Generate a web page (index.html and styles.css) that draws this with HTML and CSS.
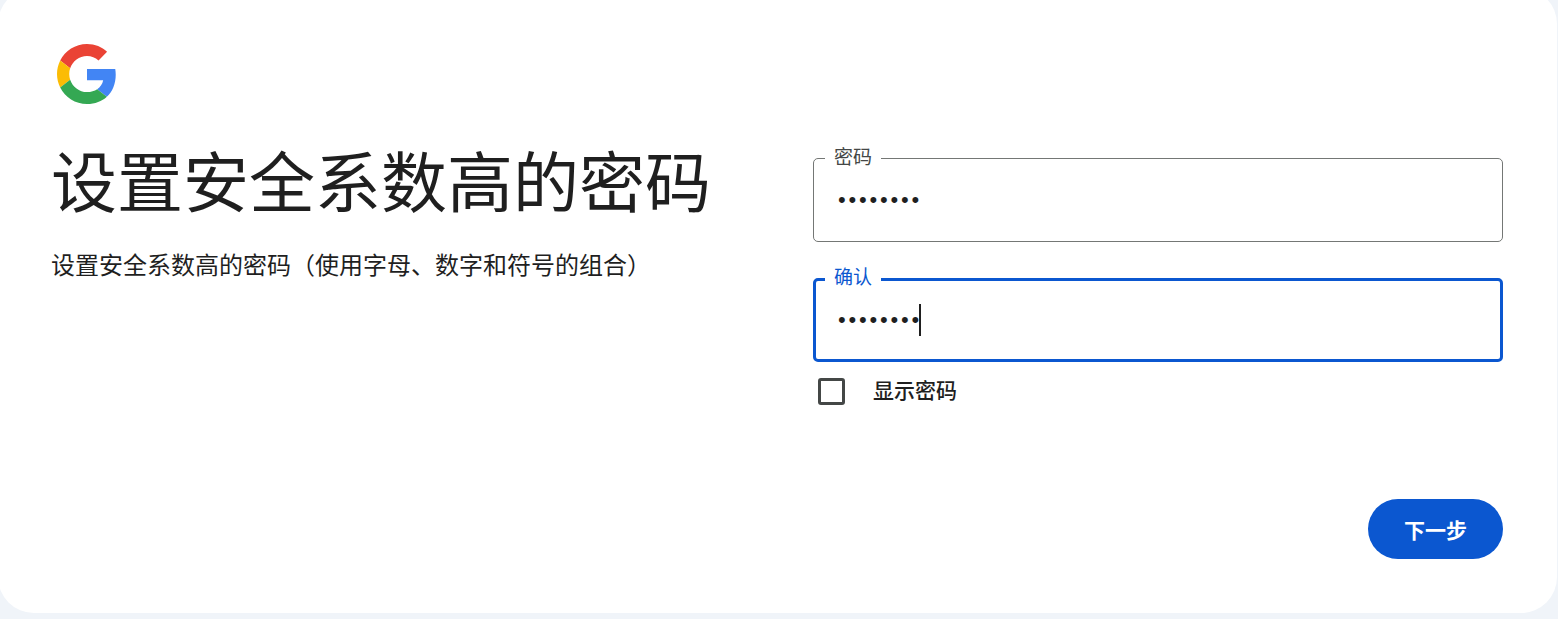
FILE: index.html
```html
<!DOCTYPE html>
<html lang="zh-CN">
<head>
<meta charset="utf-8">
<title>设置安全系数高的密码</title>
<link rel="stylesheet" href="styles.css">
</head>
<body>
<main class="card">
  <svg class="logo" viewBox="0 0 48 48" aria-hidden="true">
    <path fill="#EA4335" d="M24 9.5c3.54 0 6.71 1.22 9.21 3.6l6.85-6.85C35.9 2.38 30.47 0 24 0 14.62 0 6.51 5.38 2.56 13.22l7.98 6.19C12.43 13.72 17.74 9.5 24 9.5z"/>
    <path fill="#4285F4" d="M46.98 24.55c0-1.57-.15-3.09-.38-4.55H24v9.02h12.94c-.58 2.96-2.26 5.48-4.78 7.18l7.73 6c4.51-4.18 7.09-10.36 7.09-17.65z"/>
    <path fill="#FBBC05" d="M10.53 28.59c-.48-1.45-.76-2.99-.76-4.59s.27-3.14.76-4.59l-7.98-6.19C.92 16.46 0 20.12 0 24c0 3.88.92 7.54 2.56 10.78l7.97-6.19z"/>
    <path fill="#34A853" d="M24 48c6.48 0 11.93-2.13 15.89-5.81l-7.73-6c-2.15 1.45-4.92 2.3-8.16 2.3-6.26 0-11.57-4.22-13.47-9.91l-7.98 6.19C6.51 42.62 14.62 48 24 48z"/>
  </svg>
  <div class="columns">
    <section class="intro">
      <h1 class="title">设置安全系数高的密码</h1>
      <p class="subtitle">设置安全系数高的密码（使用字母、数字和符号的组合）</p>
    </section>
    <section class="form">
      <div class="field">
        <span class="field-label">密码</span>
        <span class="dots">••••••••</span>
      </div>
      <div class="field field-focused">
        <span class="field-label">确认</span>
        <span class="dots">••••••••</span><span class="caret"></span>
      </div>
      <div class="show-row">
        <span class="checkbox"></span>
        <span class="show-label">显示密码</span>
      </div>
    </section>
  </div>
  <div class="actions">
    <button class="next" type="button">下一步</button>
  </div>
</main>
</body>
</html>
```
FILE: styles.css
```css
* { box-sizing: border-box; }
html, body { margin: 0; height: 100%; }
body {
  background: #f0f4f9;
  font-family: "Noto Sans CJK SC", "Liberation Sans", sans-serif;
  color: #1f1f1f;
  overflow: hidden;
  height: 619px;
}
.card {
  width: 1559px;
  height: 625px;
  margin: -12px 0 0 -2px;
  background: #fff;
  border-radius: 36px;
  padding: 56px 54px 54px 53px;
  display: flex;
  flex-direction: column;
}
.logo {
  width: 60px;
  height: 60px;
  margin-left: 6px;
  flex: none;
}
.columns {
  display: flex;
  margin-top: 54px;
  flex: 1;
}
.intro { width: 762px; flex: none; }
.title {
  margin: -18px 0 0;
  font-size: 66px;
  line-height: 76px;
  font-weight: 400;
}
.subtitle {
  margin: 31px 0 0;
  font-size: 24px;
  line-height: 34px;
  font-weight: 400;
}
.form { flex: 1; display: flex; flex-direction: column; gap: 36px; }
.field {
  position: relative;
  height: 84px;
  border: 1px solid #747775;
  border-radius: 5px;
  padding-left: 24px;
  display: flex;
  align-items: center;
}
.field-focused {
  border: 3px solid #0b57d0;
  padding-left: 22px;
}
.field-label {
  position: absolute;
  left: 11px;
  top: -15px;
  background: #fff;
  padding: 0 9px;
  font-size: 19px;
  line-height: 24px;
  color: #444746;
}
.field-focused .field-label { left: 9px; top: -17px; color: #0b57d0; }
.dots {
  font-family: "Liberation Sans", sans-serif;
  font-size: 22px;
  letter-spacing: 2.8px;
  line-height: 30px;
  color: #1f1f1f;
  margin-right: -2.8px;
}
.caret {
  width: 2px;
  height: 32px;
  background: #1f1f1f;
}
.show-row {
  display: flex;
  align-items: flex-start;
  margin-top: -20px;
  padding-left: 5px;
}
.checkbox {
  width: 27px;
  height: 27px;
  border: 3px solid #444746;
  border-radius: 3px;
  flex: none;
}
.show-label {
  margin: -3px 0 0 28px;
  font-size: 21px;
  line-height: 28px;
  font-weight: 500;
}
.actions { display: flex; justify-content: flex-end; margin-top: auto; }
.next {
  width: 135px;
  height: 60px;
  border: 0;
  border-radius: 30px;
  background: #0b57d0;
  color: #fff;
  font-family: inherit;
  font-size: 21px;
  font-weight: 700;
}
```
